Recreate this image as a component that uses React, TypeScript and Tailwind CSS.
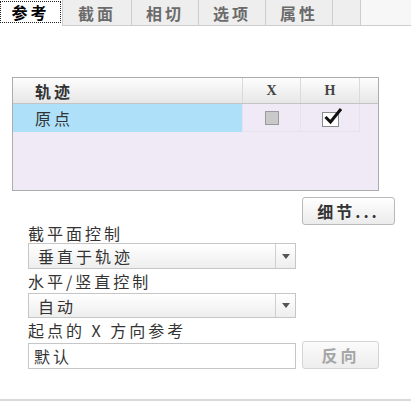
import React from "react";

const font = { fontFamily: '"Noto Sans CJK SC", "Noto Sans", sans-serif' };

function Tab({ label, width }: { label?: string; width: string }) {
  return (
    <div
      className={`${width} h-[26px] border-l border-b border-[#cdcdcd] bg-[#eeeeee] flex items-center justify-center text-[16px] font-bold text-[#6b6b6b] tracking-[3px]`}
    >
      {label}
    </div>
  );
}

function Select({ value, h }: { value: string; h: string }) {
  return (
    <div className={`w-[268px] ${h} flex border border-[#c6c6c6] bg-gradient-to-b from-[#ffffff] to-[#eeeeee]`}>
      <div className="flex-1 flex items-center pl-[9px] text-[16px] tracking-[3px] text-[#333] leading-none">{value}</div>
      <div className="w-[20px] border-l border-[#cfcfcf] flex items-center justify-center">
        <svg width="8" height="5" viewBox="0 0 8 5">
          <path d="M0 0 L8 0 L4 5 Z" fill="#555" />
        </svg>
      </div>
    </div>
  );
}

export default function App() {
  return (
    <div className="w-[411px] h-[403px] bg-white flex flex-col overflow-hidden" style={font}>
      {/* tabs */}
      <div className="flex h-[26px]">
        <div className="w-[62px] h-[26px] pt-[1px] pb-[3px] pr-[1px] bg-white">
          <div className="h-full border border-dotted border-[#222] flex items-center justify-center text-[16px] font-bold text-black tracking-[3px]">
            参考
          </div>
        </div>
        <Tab label="截面" width="w-[69px]" />
        <Tab label="相切" width="w-[67px]" />
        <Tab label="选项" width="w-[67px]" />
        <Tab label="属性" width="w-[67px]" />
        <Tab width="w-[28px]" />
        <div className="flex-1 h-[26px] border-l border-b border-[#cdcdcd] bg-[#f7f7f7]" />
      </div>

      {/* table */}
      <div className="mt-[51px] ml-[12px] w-[367px] h-[114px] border border-[#acacac] bg-[#f0eaf6] flex flex-col">
        <div className="flex h-[26px] border-b border-[#c4c4c4] bg-gradient-to-b from-[#fdfdfd] to-[#e7e7e7]">
          <div className="w-[229px] flex items-center pl-[22px] text-[16px] font-bold text-[#333] tracking-[3px]">轨迹</div>
          <div
            className="w-[58px] border-l border-[#dadada] flex items-center justify-center text-[14px] font-bold text-[#444]"
            style={{ fontFamily: '"Liberation Serif", serif' }}
          >
            X
          </div>
          <div
            className="w-[59px] border-l border-[#dadada] flex items-center justify-center text-[14px] font-bold text-[#444]"
            style={{ fontFamily: '"Liberation Serif", serif' }}
          >
            H
          </div>
          <div className="flex-1 border-l border-[#dadada]" />
        </div>
        <div className="flex h-[28px]">
          <div className="w-[229px] bg-[#aee1f9] flex items-center pl-[22px] text-[16px] text-[#333] tracking-[3px]">原点</div>
          <div className="w-[58px] border-l border-b border-[#e6e1ee] flex items-center justify-center">
            <div className="w-[14px] h-[14px] bg-[#c9c9c9] border border-[#9a9a9a]" />
          </div>
          <div className="w-[59px] border-l border-b border-[#e6e1ee] flex items-center justify-center">
            <div className="relative w-[17px] h-[15px] bg-white border border-[#8a8a8a] mt-[3px]">
              <svg className="absolute -top-[6px] left-[1px]" width="19" height="19" viewBox="0 0 19 19">
                <path d="M1.5 10 L6.5 15 L17 2" fill="none" stroke="#111" strokeWidth="3" strokeLinejoin="miter" />
              </svg>
            </div>
          </div>
          <div className="flex-1 border-l border-[#e6e1ee]" />
        </div>
      </div>

      {/* 细节 button */}
      <div className="flex justify-end pr-[16px] mt-[6px]">
        <div className="w-[93px] h-[28px] rounded-[3px] border border-[#b9b9b9] bg-gradient-to-b from-[#ffffff] to-[#ebebeb] flex items-center justify-center text-[16px] font-bold text-[#333] tracking-[3px]">
          细节...
        </div>
      </div>

      {/* form */}
      <div className="pl-[28px] flex flex-col">
        <div className="h-[18px] leading-[16px] text-[16px] text-[#333] tracking-[3px]">截平面控制</div>
        <Select value="垂直于轨迹" h="h-[26px]" />
        <div className="h-[24px] pt-[2px] leading-[21px] text-[16px] text-[#333] tracking-[3px]">水平/竖直控制</div>
        <Select value="自动" h="h-[25px]" />
        <div className="h-[23px] pt-[3px] leading-[19px] text-[16px] text-[#333] tracking-[3px] whitespace-pre">起点的 X 方向参考</div>
        <div className="flex items-end">
          <div className="w-[268px] h-[26px] border border-[#c6c6c6] bg-white flex items-center pl-[5px] text-[16px] text-[#333] tracking-[3px]">
            默认
          </div>
          <div className="ml-[6px] w-[77px] h-[28px] rounded-[3px] border border-[#d4d4d4] bg-gradient-to-b from-[#fbfbfb] to-[#eeeeee] flex items-center justify-center text-[16px] font-bold text-[#a6a6a6] tracking-[3px]">
            反向
          </div>
        </div>
      </div>

      <div className="flex-1" />
      <div className="h-[2px] bg-[#d9d9d9] mb-[2px]" />
    </div>
  );
}
